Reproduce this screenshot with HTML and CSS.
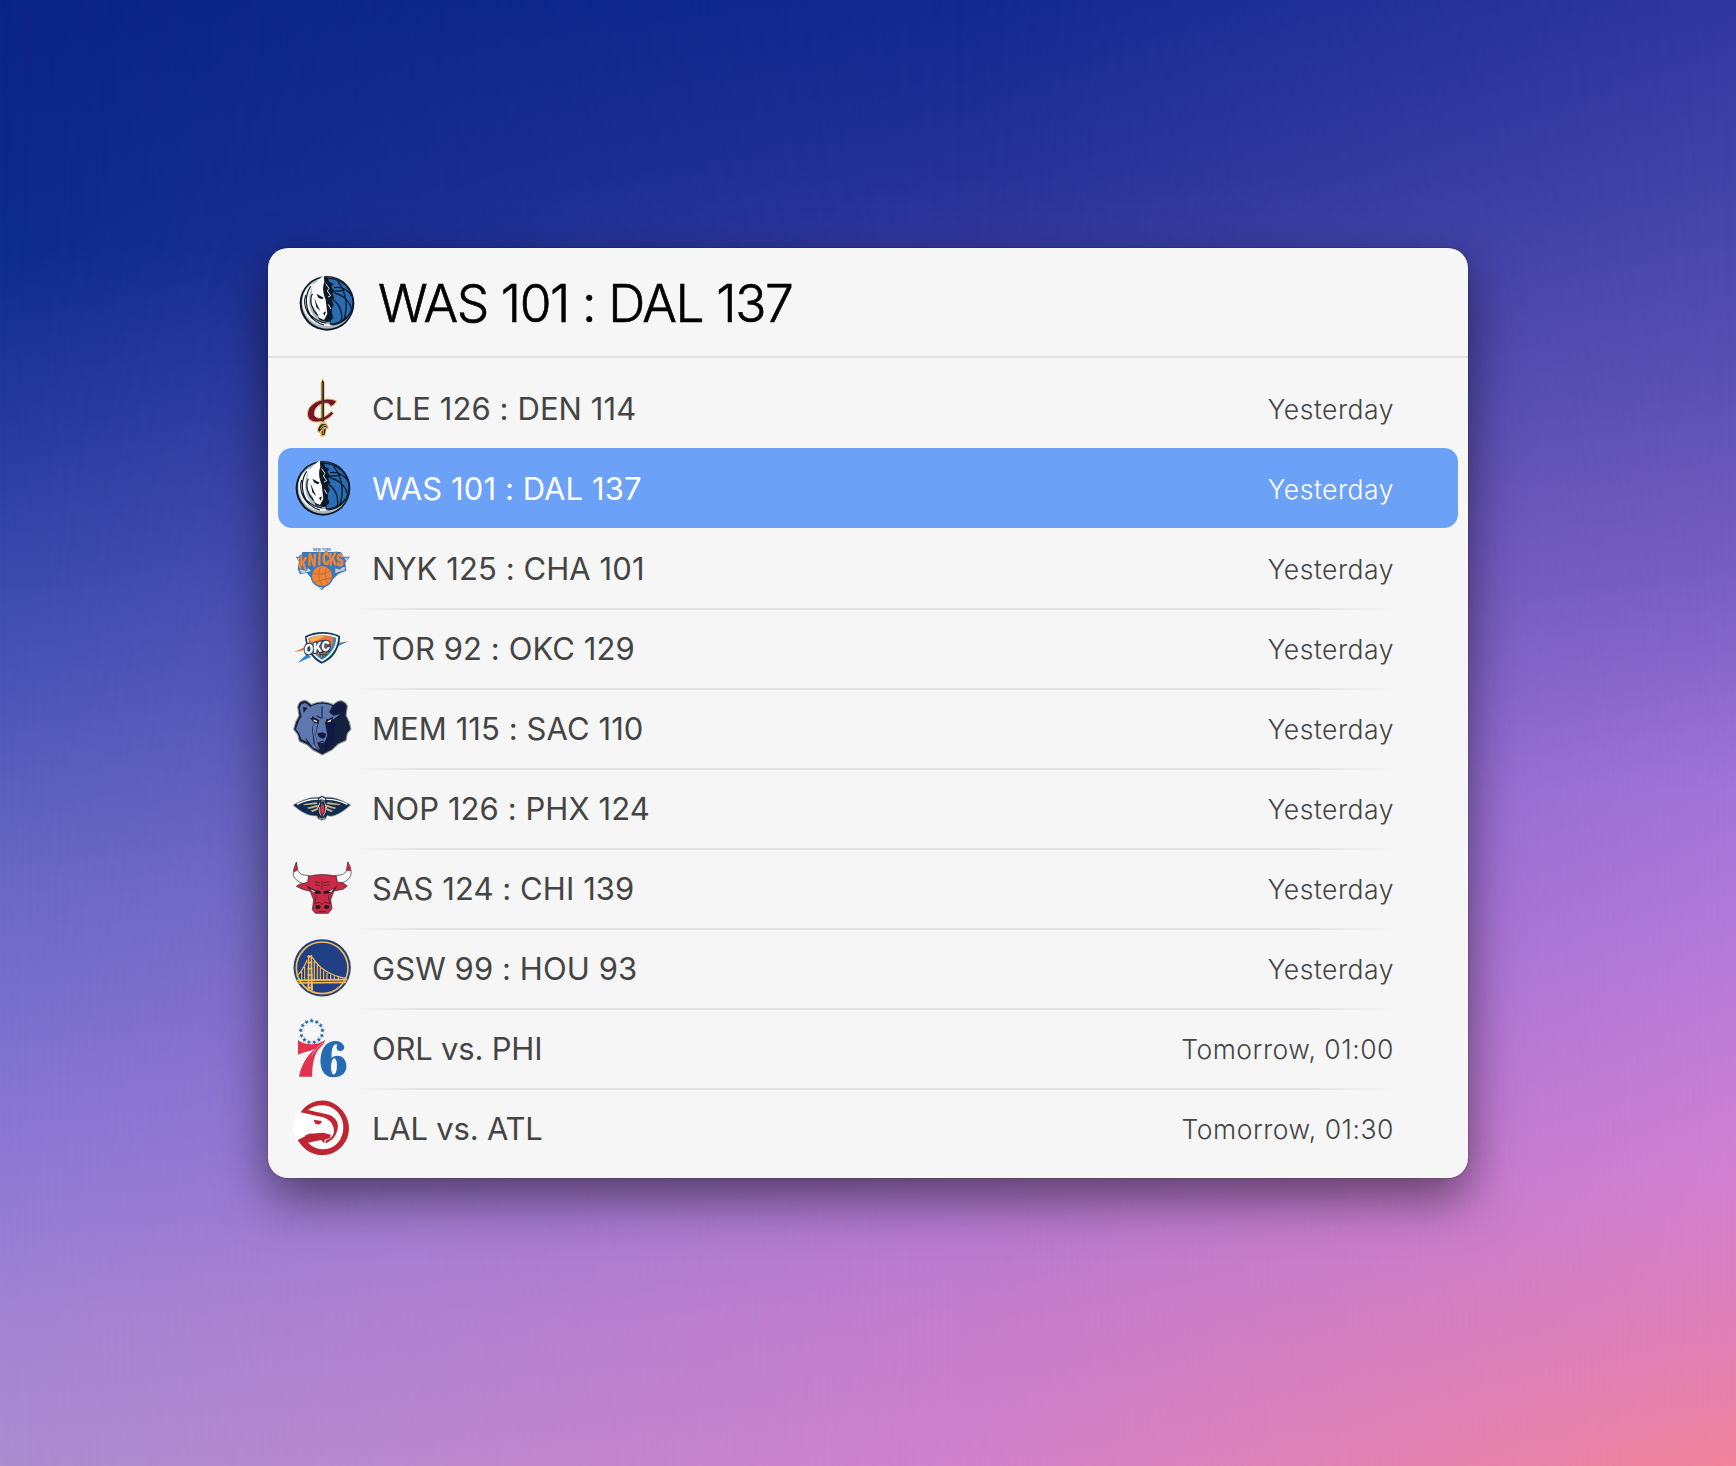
FILE: index.html
```html
<!DOCTYPE html>
<html lang="en">
<head>
<meta charset="utf-8">
<title>NBA scores</title>
<link rel="stylesheet" href="styles.css">
</head>
<body>
<svg class="defs" aria-hidden="true">
  <symbol id="mavs" viewBox="0 0 225 225">
    <circle cx="114" cy="115" r="82" fill="#0b1a26"/>
    <circle cx="115" cy="114" r="77" fill="#aeb9c1"/>
    <path d="M100 38C150 30 193 66 193 113C193 152 163 180 124 182C110 130 100 70 100 38Z" fill="#0b1a26"/>
    <path d="M118 42C160 43 190 76 190 113C190 147 160 174 124 175C131 130 134 80 118 42Z" fill="#2a6db5"/>
    <path d="M135 68C157 64 174 70 187 92M136 84C164 90 183 111 187 132M132 104C155 120 162 150 156 170M146 49C172 80 178 126 164 167M128 80L166 76" fill="none" stroke="#0b1a26" stroke-width="4"/>
    <path d="M108 39L121 51L134 57L127 65L137 80L130 85L136 99L128 106L134 120L127 136L133 160L117 172L92 166L80 140L84 58Z" fill="#0b1a26"/>
    <path d="M104 31L106 52C99 66 103 88 110 104L115 146L105 165L90 158L78 132L69 121L66 98L70 65C78 51 91 43 104 31Z" fill="#fff"/>
    <path d="M75 54C43 70 34 103 45 136C57 169 92 190 134 180C108 179 84 169 70 149L77 155C55 131 54 91 75 54Z" fill="#fff"/>
    <path d="M65 64C45 93 49 137 72 160M70 86C60 107 68 133 85 151M50 90C38 128 63 168 105 180M66 151C80 166 95 172 112 174" fill="none" stroke="#0b1a26" stroke-width="3.500"/>
    <path d="M82 86L104 98L99 103L88 98ZM102 144L111 139L107 152ZM76 98L84 118L94 139L82 127Z" fill="#0b1a26"/>
    <path d="M110 56L120 70L115 78L125 92L117 96M118 118L126 132" fill="none" stroke="#e2e7ea" stroke-width="3"/>
  </symbol>
  <symbol id="cavs" viewBox="0 0 225 225">
    <path d="M113 24L119 36V154L126 162L131 174L127 180L124 174L121 198L108 201L105 190L96 186L97 174L107 158V38Z" fill="#f0b95c"/>
    <path d="M136 110L146 105L155 94C137 81 92 86 73 113C63 129 65 153 91 156C110 158 133 147 146 130L139 124C123 141 104 148 94 142C80 132 92 105 114 101C127 97 135 101 136 110Z" fill="#74152d" stroke="#f0b95c" stroke-width="3"/>
    <path d="M110 38L113 29L117 38V154H110Z" fill="#19222c"/>
    <path d="M113 38V151" stroke="#8c7057" stroke-width="2"/>
    <path d="M99 181C103 166 109 161 117 162C126 163 128 169 127 173L117 170L103 185ZM110 185L123 174L119 194L111 196Z" fill="#19222c"/>
    <path d="M106 177C114 165 120 163 127 171M115 174V193" stroke="#bd8d43" stroke-width="4" fill="none"/>
  </symbol>
  <symbol id="grizzlies" viewBox="0 0 225 225">
    <g transform="translate(0 -9) scale(1 1.050)">
      <path d="M49 41Q58 36 66 40L79 50C99 40 124 40 145 50L158 41Q169 37 176 42Q187 48 187 57L183 81L193 100L198 120L187 133L183 153L160 163L142 179L112 194L84 180L66 165L43 155L38 136L26 121L32 100L42 82L38 58Q40 45 49 41Z" fill="#13213d" stroke="#8c9298" stroke-width="3"/>
      <path d="M49 49L61 46L76 57C94 45 124 45 142 54L132 72L145 82L166 78L141 95L125 91L120 103L127 137L118 160H98L92 138L101 102L90 91L74 88L86 101L81 119L86 163L102 181L83 173L68 157L49 149L43 133L33 121L42 96L50 84L44 61Z" fill="#5e78ae"/>
      <path d="M86 103L98 104L91 137L97 160L105 181L90 166L83 120Z" fill="#5e78ae"/>
      <path d="M145 53L162 46L178 51L179 64L166 76L147 74ZM128 100L146 100L152 109L145 124L148 151L133 171L116 184L123 160L130 146Z" fill="#121745"/>
      <path d="M54 57L68 59L56 74ZM81 83L103 95L101 102L83 97ZM125 94L145 84L141 99L126 103ZM97 133L112 129L124 134L120 144L114 148L101 143Z" fill="#11193e"/>
      <path d="M85 92L97 97L95 101L86 98ZM128 97L140 92L137 99L128 101Z" fill="#f5d6a2"/>
      <path d="M111 55V91M95 82L108 89M98 161L112 155L124 161M62 147L80 170" fill="none" stroke="#11193e" stroke-width="3"/>
    </g>
  </symbol>
  <symbol id="pelicans" viewBox="0 0 225 225">
    <path d="M24 105C50 91 76 80 101 82L111 77L122 82C148 79 174 92 197 105C178 122 157 137 137 139L126 137L122 147L110 151L99 146L96 138C69 139 45 124 24 105Z" fill="#102c50" stroke="#a2a4a4" stroke-width="2"/>
    <path d="M36 103C60 91 80 87 99 88M124 88C148 87 168 94 187 103" fill="none" stroke="#fff" stroke-width="4"/>
    <path d="M53 103L94 96L98 102L60 106ZM66 113L97 104L99 110L72 117ZM76 122L98 113L99 119L83 126ZM168 103L128 96L124 102L161 106ZM154 113L124 104L123 110L149 117ZM145 122L123 113L122 119L138 126Z" fill="#c5ad7b"/>
    <path d="M102 87L111 81L121 87L119 98L126 112L119 120L111 110L103 120L97 113L105 97Z" fill="#fff"/>
    <path d="M101 91L110 88L120 91L118 98L124 117L117 139L106 139L99 116L106 98Z" fill="#102c50"/>
    <path d="M109 101H115L119 124L112 134L105 125Z" fill="#cf354c"/>
    <path d="M103 112V126L108 137M122 111L121 126L114 139M108 93H116M102 143L111 147L120 143" fill="none" stroke="#c5ad7b" stroke-width="3"/>
  </symbol>
  <symbol id="bulls" viewBox="0 0 225 225">
    <path d="M34 36L39 64L50 74L74 77L69 102C44 102 22 86 25 66ZM188 36L184 64L173 74L148 77L153 102C181 101 202 83 198 63Z" fill="#fff" stroke="#222" stroke-width="2"/>
    <path d="M34 37L37 61L28 66L25 60ZM189 37L196 49L198 62L185 62Z" fill="#cb2946" stroke="#222" stroke-width="1"/>
    <path d="M70 79Q112 68 154 79L157 96L174 99L187 108L174 118L147 123L137 149L141 176L130 190H91L82 179L86 150L76 124L52 118L34 109L43 103L68 97Z" fill="#cb2946" stroke="#222" stroke-width="2"/>
    <path d="M65 107L89 121L105 122L108 131L93 131L75 121ZM158 107L136 121L118 123L115 131L133 130L148 121Z" fill="#171c22"/>
    <path d="M74 116L92 125L85 127ZM149 115L131 125L138 126Z" fill="#fff"/>
    <path d="M89 96L105 98M116 98L134 95M91 105L105 106M116 106L133 104M111 93V118M94 135L90 159M130 135L134 159M88 161L104 157L111 163L119 157L136 161" fill="none" stroke="#222" stroke-width="2"/>
    <ellipse cx="99" cy="171" rx="8" ry="6" fill="#171c22"/><ellipse cx="125" cy="171" rx="8" ry="6" fill="#171c22"/>
    <path d="M101 185H122" stroke="#171c22" stroke-width="2"/>
  </symbol>
  <symbol id="warriors" viewBox="0 0 225 225">
    <circle cx="111.500" cy="113.500" r="86" fill="#213f85"/>
    <circle cx="111.500" cy="113.500" r="77.500" fill="#213f85" stroke="#f5bd54" stroke-width="5"/>
    <path d="M69 75H73V182H67ZM77 75H81L84 182H77Z" fill="#f5bd54"/>
    <path d="M67 80H82M68 98H82M67 116H82M67 135H82M36 151L187 149M36 159L184 157M68 173H83" fill="none" stroke="#f5bd54" stroke-width="5"/>
    <path d="M82 82C105 118 138 138 184 145M67 89C58 110 47 127 35 139M88 93V151M97 104V151M106 114V151M116 122V151M126 129V151M137 135V151M148 139V151M160 142V151M59 110V151M50 124V151" fill="none" stroke="#f5bd54" stroke-width="3.500"/>
  </symbol>
  <symbol id="sixers" viewBox="0 0 225 225">
    <g fill="#276bb3">
      <path id="star" d="M80 25l2 4.500 5 .5-3.700 3.300 1.200 5-4.500-2.600-4.500 2.600 1.200-5-3.700-3.300 5-.5z"/>
      <use href="#star" transform="rotate(27.700 80 65)"/><use href="#star" transform="rotate(55.400 80 65)"/>
      <use href="#star" transform="rotate(83.100 80 65)"/><use href="#star" transform="rotate(110.800 80 65)"/>
      <use href="#star" transform="rotate(138.500 80 65)"/><use href="#star" transform="rotate(166.200 80 65)"/>
      <use href="#star" transform="rotate(193.800 80 65)"/><use href="#star" transform="rotate(221.500 80 65)"/>
      <use href="#star" transform="rotate(249.200 80 65)"/><use href="#star" transform="rotate(276.900 80 65)"/>
      <use href="#star" transform="rotate(304.600 80 65)"/><use href="#star" transform="rotate(332.300 80 65)"/>
    </g>
    <path d="M39 90C61 108 98 106 121 90C117 105 102 114 96 125C85 143 82 169 81 200H42C48 166 69 132 90 117C70 125 52 127 39 134Z" fill="#e13250"/>
    <path d="M115 98C98 110 88 122 80 137" fill="none" stroke="#f6f6f6" stroke-width="1.500"/>
    <path fill-rule="evenodd" d="M177 108C169 87 130 86 115 115C100 143 102 202 144 202C171 202 186 187 184 165C182 137 154 130 140 144C138 119 145 98 157 104C151 114 158 125 168 123C175 121 180 116 177 108ZM147 145C159 143 159 191 147 194C135 193 136 150 147 145Z" fill="#276bb3"/>
  </symbol>
  <symbol id="hawks" viewBox="0 0 225 225">
    <circle cx="108" cy="114" r="84" fill="#fff"/>
    <path d="M47 67C72 29 123 20 158 48C201 82 203 142 165 175C126 210 67 200 38 150L76 131L115 128L137 134L136 144L119 149L118 160L108 150L69 158C98 187 142 184 164 151C191 108 167 48 112 46C93 46 80 52 69 60L132 74C155 83 164 103 156 124C151 141 139 154 121 160L123 151C142 146 150 130 146 114C140 90 120 82 100 79Z" fill="#be2631"/>
    <path d="M86 89L110 93C110 102 99 108 90 100ZM61 136L78 130L76 137L61 143Z" fill="#be2631"/>
  </symbol>
</svg>

<main class="panel">
  <header class="header">
    <svg class="logo"><use href="#mavs"/></svg>
    <h1 class="title">WAS 101 : DAL 137</h1>
  </header>
  <ul class="list">
    <li class="row"><svg class="logo"><use href="#cavs"/></svg><span class="game">CLE 126 : DEN 114</span><span class="when">Yesterday</span></li>
    <li class="row selected"><svg class="logo"><use href="#mavs"/></svg><span class="game">WAS 101 : DAL 137</span><span class="when">Yesterday</span></li>
    <li class="row">
      <svg class="logo" viewBox="0 0 225 225">
        <path d="M32 80H195L181 98L184 122L160 132L110 181L65 128L45 133L39 119L48 103Z" fill="#3c78b8"/>
        <path d="M37 83H58L45 99ZM178 83H190L184 94ZM43 121L67 111L79 124L50 130ZM151 112L180 112L179 121L151 129ZM100 169L112 168L111 178Z" fill="#c9ced2"/>
        <text x="84" y="64" textLength="54" lengthAdjust="spacingAndGlyphs" class="knicks-city">NEW YORK</text>
        <path d="M52 66H168L180 106L164 119L142 112H80L58 120L38 116Z" fill="#3c78b8"/>
        <text transform="scale(.62 1)" x="64 108 156 178 212 248" y="115 107 105 105 107 110" rotate="8 4 2 0 -3 -4" class="knicks-name">KNICKS</text>
        <circle cx="111" cy="138" r="32" fill="#f18432" stroke="#3c78b8" stroke-width="4"/>
        <path d="M109 106C99 123 99 153 114 169M82 128C99 136 124 133 138 119M88 157C104 154 126 142 142 145M126 111C116 126 121 152 130 162" fill="none" stroke="#a96c4a" stroke-width="2.500"/>
      </svg>
      <span class="game">NYK 125 : CHA 101</span><span class="when">Yesterday</span>
    </li>
    <li class="row ruled">
      <svg class="logo" viewBox="0 0 225 225">
        <path d="M28 126L62 110L64 116L50 122ZM134 104L194 93L150 108L134 118Z" fill="#ed6842"/>
        <path d="M37 159L66 132L78 141ZM156 80L166 79L163 98L186 96L152 112Z" fill="#328ac9"/>
        <path d="M60 79C91 62 132 62 165 78C164 121 143 147 110 161C80 148 62 117 60 79Z" fill="#173657"/>
        <path d="M65 82C96 68 130 68 160 81C157 118 139 140 111 155C85 141 68 117 65 82Z" fill="#fff"/>
        <path d="M70 85C97 73 126 73 154 84C152 115 134 136 111 149C89 137 73 114 70 85Z" fill="#2388ce"/>
        <path d="M71 86C99 74 125 74 146 83C146 112 129 131 109 142C90 131 76 112 71 86Z" fill="#f16f3b"/>
        <path d="M72 86C91 77 107 75 124 76C112 82 99 90 82 98Z" fill="#f5b34c"/>
        <path d="M93 124H134M101 134H126M114 110V142M128 108L122 139M104 118L106 140" fill="none" stroke="#173657" stroke-width="2.500"/>
        <text x="60" y="134" textLength="78" lengthAdjust="spacingAndGlyphs" class="okc-name" transform="rotate(-10 60 134)">OKC</text>
      </svg>
      <span class="game">TOR 92 : OKC 129</span><span class="when">Yesterday</span>
    </li>
    <li class="row ruled"><svg class="logo"><use href="#grizzlies"/></svg><span class="game">MEM 115 : SAC 110</span><span class="when">Yesterday</span></li>
    <li class="row ruled"><svg class="logo"><use href="#pelicans"/></svg><span class="game">NOP 126 : PHX 124</span><span class="when">Yesterday</span></li>
    <li class="row ruled"><svg class="logo"><use href="#bulls"/></svg><span class="game">SAS 124 : CHI 139</span><span class="when">Yesterday</span></li>
    <li class="row ruled"><svg class="logo"><use href="#warriors"/></svg><span class="game">GSW 99 : HOU 93</span><span class="when">Yesterday</span></li>
    <li class="row ruled"><svg class="logo"><use href="#sixers"/></svg><span class="game upcoming">ORL vs. PHI</span><span class="when">Tomorrow, 01:00</span></li>
    <li class="row ruled"><svg class="logo"><use href="#hawks"/></svg><span class="game upcoming">LAL vs. ATL</span><span class="when">Tomorrow, 01:30</span></li>
  </ul>
</main>
</body>
</html>
```
FILE: styles.css
```css
* { box-sizing: border-box; }

body {
  position: relative;
  isolation: isolate;
  margin: 0;
  height: 1466px;
  padding-top: 248px;
  overflow: hidden;
  font-family: Inter, "Liberation Sans", sans-serif;
  background: linear-gradient(180deg, #0a2484 0%, #0e2b8e 17%, #2b3da1 31%, #4753b5 45%, #6a68c4 60%, #8977d4 77%, #a184d2 90%, #ab8dd0 100%);
}

/* The wallpaper is three vertical ramps blended across the width. */
body::before,
body::after {
  content: "";
  position: absolute;
  inset: 0;
  z-index: -1;
}

body::before {
  background: linear-gradient(180deg, #112991 0%, #263196 12%, #4a43a8 25%, #6856b8 40%, #8064c4 55%, #9b70cc 70%, #b179cf 82%, #c47dcc 90%, #cf81cb 100%);
  -webkit-mask-image: linear-gradient(90deg, transparent 0%, #000 55%);
  mask-image: linear-gradient(90deg, transparent 0%, #000 55%);
}

body::after {
  background: linear-gradient(180deg, #31369f 0%, #4243a7 12%, #5a4fb3 25%, #7960c2 40%, #a174d8 54%, #b67bd8 66%, #d180d0 80%, #df80b4 91%, #f1839b 100%);
  -webkit-mask-image: linear-gradient(90deg, transparent 55%, #000 100%);
  mask-image: linear-gradient(90deg, transparent 55%, #000 100%);
}

.defs { position: absolute; width: 0; height: 0; }

.knicks-city { font: 700 12px Inter, sans-serif; fill: #3c78b8; }
.knicks-name {
  font: 900 52px Inter, sans-serif;
  fill: #f18432;
  stroke: #3c78b8;
  stroke-width: 5px;
  paint-order: stroke;
}
.okc-name {
  font: italic 900 41px Inter, sans-serif;
  fill: #fff;
  stroke: #173657;
  stroke-width: 7px;
  paint-order: stroke;
}

.panel {
  width: 1200px;
  height: 930px;
  margin: 0 auto;
  border-radius: 20px;
  background: #f6f6f6;
  box-shadow: 0 0 2px rgba(0, 0, 0, .4), 0 20px 50px rgba(0, 0, 0, .5);
}

.header {
  display: flex;
  align-items: center;
  height: 110px;
  padding-left: 21px;
  border-bottom: 2px solid #e2e2e2;
}

.logo { flex: none; width: 75px; height: 75px; margin-bottom: 2px; overflow: visible; }

.header .logo { margin-bottom: 0; }

.title {
  margin: 0 0 0 14px;
  padding-top: 2px;
  font-size: 51.5px;
  font-weight: 300;
  line-height: 62px;
  letter-spacing: -1.42px;
  color: #000;
  -webkit-text-stroke: .6px #000;
  white-space: pre;
}

.list { margin: 0; padding: 10px; list-style: none; }

.row {
  display: flex;
  align-items: center;
  height: 80px;
  padding: 0 64px 0 7px;
  color: #444;
}

.ruled {
  background: linear-gradient(90deg, transparent 70px, #e2e2e2 145px, #e2e2e2 1030px, transparent 1116px) no-repeat 0 0 / 100% 2px;
}

.selected { border-radius: 14px; background: #6ca1f8; color: #fff; }

.game {
  flex: 1;
  margin-left: 12px;
  padding-top: 2px;
  font-size: 31px;
  font-weight: 400;
  line-height: 38px;
  letter-spacing: .08px;
}

.upcoming { letter-spacing: -.2px; }

.when {
  padding-top: 2px;
  font-size: 26.5px;
  font-weight: 300;
  line-height: 34px;
  letter-spacing: .52px;
}
```
